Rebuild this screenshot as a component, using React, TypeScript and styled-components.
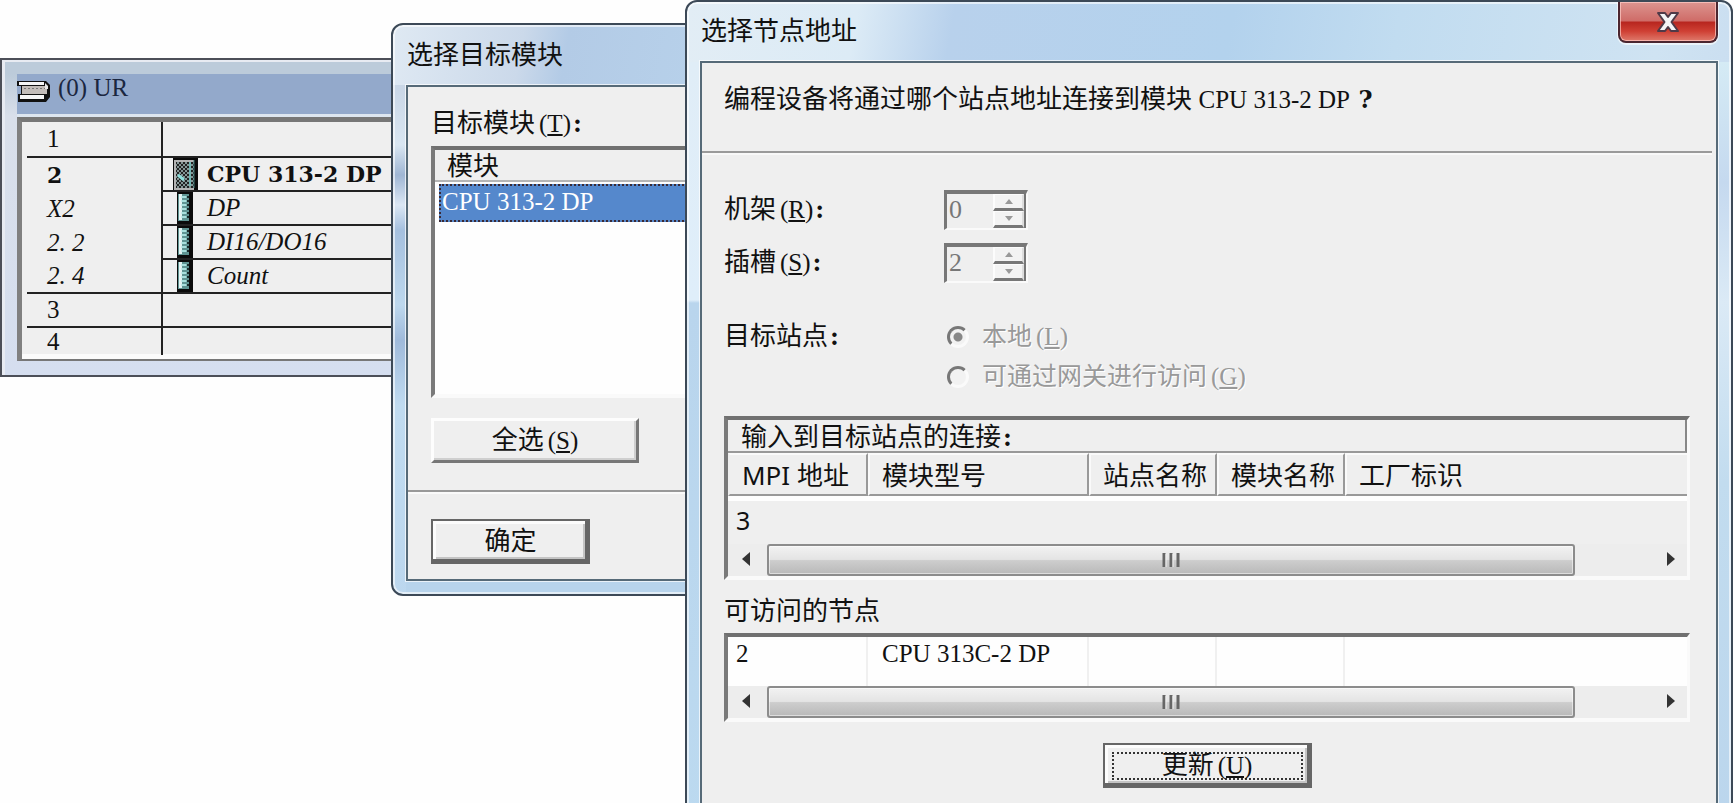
import React from 'react';
import styled, { createGlobalStyle, css } from 'styled-components';

const GlobalStyle = createGlobalStyle`
  *, *::before, *::after { box-sizing: border-box; }
  body { margin: 0; background: #fefefe; }
  button, input { font: inherit; color: inherit; margin: 0; }
`;

const serifStack = `'Liberation Serif', 'Noto Sans CJK SC', serif`;
const sansStack = `'Noto Sans', 'Noto Sans CJK SC', sans-serif`;

const Desktop = styled.main`
  position: relative;
  height: 100vh;
  min-height: 600px;
  overflow: hidden;
  background: #fefefe;
  color: #111;
  font: 26px/32px ${serifStack};
`;

/* ---------- rack window ---------- */

const RackWindow = styled.section`
  position: absolute;
  left: 0;
  top: 58px;
  width: 440px;
  padding: 14px 0 14px 15px;
  border: 2px solid #4c4f58;
  background: linear-gradient(180deg, #bccbda 0, #bccbda 14px, #d9dfea 56px, #d5deef 100%);
  box-shadow: inset 3px 2px 0 #e8ebf2;
`;

const RackTitle = styled.h2`
  display: flex;
  align-items: flex-start;
  gap: 7px;
  margin: 0;
  height: 43px;
  border-bottom: 3px solid #dde6f0;
  background: #93a9cb;
  color: #1b2740;
  font-size: 25px;
  font-weight: 400;
  line-height: 28px;

  svg { margin-top: 6px; }
`;

const RackPane = styled.div`
  border-top: 5px solid #777;
  border-left: 5px solid #808080;
  border-bottom: 2px solid #777;
  padding: 0 0 4px 5px;
  background: #efefef;
  box-shadow: inset 0 -5px 0 #fbfbfb;
`;

const RackTable = styled.table`
  width: 100%;
  border-collapse: separate;
  border-spacing: 0;
  table-layout: fixed;
`;

const RackRow = styled.tr<{ $tone?: 'bold' | 'italic'; $last?: boolean }>`
  height: ${p => (p.$last ? 27 : 34)}px;
  font-size: 25px;
  line-height: 26px;
  &:first-child { height: 36px; }
  ${p => p.$tone === 'italic' && css`font-style: italic;`}
  ${p => p.$tone === 'bold' && css`
    font-family: 'DejaVu Serif', serif;
    font-weight: 700;
    font-size: 22px;
  `}
`;

const SlotCell = styled.td<{ $line?: boolean }>`
  width: 136px;
  padding: 0 0 0 20px;
  border-right: 2px solid #222;
  border-bottom: ${p => (p.$line ? '2px solid #222' : '0')};
`;

const ModuleCell = styled.td<{ $line?: boolean }>`
  padding: 0 0 0 9px;
  border-bottom: ${p => (p.$line ? '2px solid #222' : '0')};
`;

const ModuleName = styled.div`
  display: flex;
  align-items: center;
  gap: 9px;
  height: 32px;
  white-space: nowrap;
`;

const IconSlot = styled.span`
  display: flex;
  justify-content: center;
  width: 26px;

  svg { display: block; }
`;

/* ---------- dialog frame ---------- */

const Dialog = styled.section<{ $main?: boolean }>`
  position: absolute;
  display: flex;
  flex-direction: column;
  padding: 0 13px 13px;
  border: 2px solid #3c4957;
  border-radius: 12px;
  ${p => p.$main ? css`
    left: 685px;
    right: 1px;
    top: 0;
    min-height: calc(100vh + 20px);
    background:
      linear-gradient(180deg, #e0edf7 0, #dfeefa 238px, #b9d5ed 241px, #bcdaf0 100%) 0 60px / 13px 100% no-repeat,
      linear-gradient(180deg, #d5ebf5 0, #c5d9ef 120px, #dbeaf6 240px, #c2dcef 420px, #b9d4ec 100%) 100% 60px / 13px 100% no-repeat,
      linear-gradient(100deg, #e2edf5 0, #dcebf6 170px, #b8d1ec 265px, #b3d2ed 46%, #c1dcf0 60%, #cfe3f2 82%, #c8dcf0 92%, #d5ebf6 100%);
  ` : css`
    left: 391px;
    top: 23px;
    width: 420px;
    background:
      linear-gradient(180deg, #c9d6e6 0, #d9e6f2 60px, #9fb6d4 90px, #dbe7f4 120px, #a5c0df 145px, #bdd8ee 220px, #9fbadb 255px, #c0dbf0 320px, #bbd6ee 100%) 0 60px / 13px 100% no-repeat,
      linear-gradient(180deg, transparent 65%, #b8d4ec 85%),
      linear-gradient(100deg, #dfe9f3 0, #cbd9ea 130px, #b3cbe6 175px, #bdd9f0 100%);
  `}
  box-shadow: inset 0 0 0 2px rgba(255, 255, 255, 0.6);
`;

const TitleBar = styled.header<{ $main?: boolean }>`
  display: flex;
  justify-content: space-between;
  align-items: center;
  height: ${p => (p.$main ? 59 : 60)}px;
  flex: none;
`;

const Title = styled.h1`
  margin: 0;
  padding: 0 0 3px 1px;
  font: 400 26px/32px ${sansStack};
`;

const CloseButton = styled.button`
  align-self: flex-start;
  display: flex;
  justify-content: center;
  align-items: center;
  width: 100px;
  height: 41px;
  padding: 0;
  border: 2px solid #4b2630;
  border-top: 0;
  border-radius: 0 0 8px 8px;
  background: linear-gradient(180deg, #dc9590 0, #cf6c68 48%, #b8261f 52%, #cf4034 75%, #df7a6c 100%);
  box-shadow: inset 0 0 0 1px rgba(255, 205, 200, 0.7), 0 1px 0 1px rgba(255, 255, 255, 0.6);
`;

const Client = styled.div`
  flex: 1;
  border: 2px solid #566a78;
  background: #efefef;
  box-shadow: 0 0 0 1px rgba(255, 255, 255, 0.7);
`;

/* ---------- shared controls ---------- */

const Bold = styled.b`
  padding-left: 2px;
  font-family: 'DejaVu Serif', serif;
  font-weight: 700;
  font-size: 24px;
`;

const ModelName = styled.span`
  font-size: 25px;
`;

const KeyHint = styled.span`
  margin-left: 4px;
  font-size: 25px;

  u {
    text-decoration-thickness: 2px;
    text-underline-offset: 2px;
  }
`;

const Key = ({ children }: { children: string }) => <KeyHint>(<u>{children}</u>)</KeyHint>;

const Sunken = styled.div`
  border: solid;
  border-width: 4px 3px 4px 4px;
  border-color: #707070 #fafafa #fafafa #7a7a7a;
  background: #fefefe;
`;

const PushButton = styled.button<{ $width: number; $default?: boolean }>`
  display: flex;
  align-items: center;
  justify-content: center;
  width: ${p => p.$width}px;
  height: 45px;
  padding: 0;
  background: #efefef;
  white-space: pre;
  ${p => p.$default ? css`
    border: 2px solid #666;
    box-shadow: inset -3px -3px 0 #666, inset 3px 3px 0 #fcfcfc, inset -5px -5px 0 #c4c4c4;
  ` : css`
    border: solid;
    border-width: 3px;
    border-color: #fdfdfd #777 #777 #fdfdfd;
    box-shadow: inset -2px -2px 0 #cfcfcf;
  `}
`;

const FocusRing = styled.span`
  flex: 1;
  margin: 0 7px;
  height: 28px;
  line-height: 24px;
  border: 2px dotted #333;
`;

/* ---------- target module dialog ---------- */

const ModuleBody = styled.div`
  padding: 21px 24px 27px 23px;
`;

const FieldTitle = styled.div`
  margin-bottom: 6px;
`;

const ModuleList = styled(Sunken)`
  height: 252px;
  margin-bottom: 20px;
`;

const ModuleTable = styled.table`
  width: 100%;
  border-collapse: separate;
  border-spacing: 0;

  th {
    height: 32px;
    padding: 4px 0 0 12px;
    border-bottom: 2px solid #b5b5b5;
    background: #efefef;
    font-weight: 400;
    line-height: 26px;
    text-align: left;
  }
  td { padding: 2px 0 0 4px; }
`;

const SelectedItem = styled.div`
  padding: 0 1px 2px;
  border: 2px dotted #3a2a35;
  background: #5588cc;
  color: #fff;
  font-size: 25px;
`;

const ModuleFooter = styled.footer`
  padding: 27px 24px 15px 23px;
  border-top: 2px solid #999;
  box-shadow: inset 0 2px 0 #fafafa;
`;

/* ---------- node address dialog ---------- */

const Prompt = styled.p`
  margin: 0 4px 0 0;
  padding: 21px 22px 35px;
  border-bottom: 2px solid #9a9a9a;
  box-shadow: 0 2px 0 #f8f8f8;
  white-space: nowrap;
`;

const NodeBody = styled.div`
  padding: 37px 26px 40px 22px;
`;

const Form = styled.div`
  display: grid;
  grid-template-columns: 220px 1fr;
  grid-auto-rows: 40px;
  row-gap: 13px;
  align-items: center;
`;

const StationGroup = styled.div`
  display: grid;
  grid-template-columns: 220px 1fr;
  grid-auto-rows: 40px;
  align-items: center;
  margin: 34px 0 19px;
`;

const Spinner = styled.div`
  display: flex;
  width: 84px;
  height: 40px;
  border: solid;
  border-width: 4px 2px 2px 3px;
  border-color: #777 #fafafa #fafafa #777;
  color: #777;

  input {
    flex: 1;
    min-width: 0;
    padding: 0 0 2px 2px;
    border: 0;
    background: transparent;
    color: #777;
  }
`;

const SpinButtons = styled.div`
  display: grid;
  grid-template-rows: 1fr 1fr;
  width: 33px;
  border-right: 2px solid #777;

  button {
    display: flex;
    align-items: center;
    justify-content: center;
    padding: 0;
    border: solid;
    border-width: 1px 2px 3px 2px;
    border-color: #fcfcfc #ddd #777 #fcfcfc;
    background: #f3f3f3;
  }
`;

const Option = styled.label`
  grid-column: 2;
  display: flex;
  align-items: center;
  gap: 13px;
  padding-left: 3px;
  color: #999;
  font-size: 25px;
  text-shadow: 1px 1px 0 #fff;
`;

const Radio = styled.input`
  appearance: none;
  width: 22px;
  height: 22px;
  border: 3px solid;
  border-color: #777 #fafafa #fafafa #777;
  border-radius: 50%;
  background: #f2f2f2;

  &:checked { background: radial-gradient(circle, #888 0, #888 4px, #f2f2f2 5px); }
`;

const ListTitle = styled.div`
  padding: 4px 0 0 13px;
  border-bottom: 2px solid #999;
  border-right: 2px solid #888;
  background: #efefef;
  line-height: 27px;
`;

const NodeTable = styled.table`
  width: 100%;
  border-collapse: separate;
  border-spacing: 0;
  table-layout: fixed;
`;

const HeadCell = styled.th`
  height: 43px;
  padding: 0 0 0 12px;
  border: 2px solid;
  border-color: #fafafa #999 #999 #fafafa;
  background: #efefef;
  font: 400 26px/32px ${sansStack};
  text-align: left;
  white-space: nowrap;

  &:last-child { border-right: 0; }
  &:first-child { border-left-color: #efefef; }
`;

const ConnectionCell = styled.td`
  height: 48px;
  padding: 0 0 6px 8px;
  border-top: 5px solid #fefefe;
  background: #efefef;
  font: 25px/32px ${sansStack};
`;

const NodeCell = styled.td`
  height: 49px;
  padding: 0 0 16px 14px;
  border-right: 2px solid #f0f0f0;
  font-size: 25px;
  white-space: nowrap;

  &:first-child { padding-left: 8px; }
  &:last-child { border-right: 0; }
`;

const ScrollBar = styled.div`
  display: flex;
  height: 32px;
  background: #ededed;
`;

const ScrollArrow = styled.button<{ $width: number }>`
  display: flex;
  align-items: center;
  justify-content: center;
  flex: none;
  width: ${p => p.$width}px;
  padding: 0 4px 2px 0;
  border: 0;
  background: none;
`;

const Thumb = styled.div`
  flex: 803 1 0;
  display: flex;
  align-items: center;
  justify-content: center;
  border: 2px solid #8c8c8c;
  border-radius: 3px;
  background: linear-gradient(180deg, #f2f2f2 0, #e4e4e4 48%, #cdcdcd 52%, #b9b9b9 100%);
  box-shadow: inset 0 0 0 1px rgba(255, 255, 255, 0.5);
`;

const TrackRest = styled.div`
  flex: 84 1 0;
`;

const NodesTitle = styled.div`
  margin: 16px 0 5px;
`;

const Actions = styled.div`
  display: flex;
  justify-content: center;
  margin-top: 21px;
`;

/* ---------- drawings ---------- */

const RackIcon = () => (
  <svg width="34" height="22" viewBox="0 0 34 22" aria-hidden="true">
    <path d="M0 1H29L33 5V17L29 22H1V14H4V6H0Z" fill="#111" />
    <path d="M2 2H27V5H2ZM3 15H27V19H3Z" fill="#f6f6f6" />
    <path d="M5 6H30V14H5Z" fill="#c3bdb9" />
    <path d="M7 8.500H28" stroke="#777" strokeWidth="1" strokeDasharray="2 2" />
    <path d="M28 3L31 6V9H28Z" fill="#e8e8e8" />
  </svg>
);

const CpuIcon = () => (
  <svg width="25" height="32" viewBox="0 0 25 32" aria-hidden="true">
    <defs>
      <pattern id="mesh" width="4" height="4" patternUnits="userSpaceOnUse">
        <rect width="4" height="4" fill="#222" />
        <rect width="2" height="2" fill="#849595" />
        <rect x="2" y="2" width="2" height="2" fill="#849595" />
      </pattern>
    </defs>
    <rect width="25" height="32" fill="#0b0b0b" />
    <rect x="1" y="2" width="20" height="30" fill="#b4b4b4" />
    <rect x="3" y="4" width="18" height="26" fill="url(#mesh)" />
    <path d="M17 4V28" stroke="#6fb5b3" strokeWidth="2" />
    <path d="M5 17L11 22" stroke="#8fe0dc" strokeWidth="3" />
    <path d="M21 2V30" stroke="#3c7775" strokeWidth="1" />
  </svg>
);

const CardIcon = () => (
  <svg width="16" height="32" viewBox="0 0 16 32" aria-hidden="true">
    <rect width="16" height="32" fill="#0b0b0b" />
    <rect x="1" y="2" width="11" height="27" fill="#5f9492" />
    <rect x="2" y="2" width="3" height="26" fill="#e4f3f2" />
    <path d="M7 4V28" stroke="#a9e0dd" strokeWidth="5" strokeDasharray="2 2" />
    <path d="M11 4V28" stroke="#1a2c2c" strokeWidth="2" strokeDasharray="2 2" />
  </svg>
);

const CloseIcon = () => (
  <svg width="24" height="22" viewBox="0 0 24 22" aria-hidden="true">
    <path
      d="M2 2H9L12 6L15 2H22L15.500 11L22 20H15L12 16L9 20H2L8.500 11Z"
      fill="#f4f4f6"
      stroke="#4f3a48"
      strokeWidth="2"
      strokeLinejoin="round"
    />
  </svg>
);

const Triangle = ({ dir }: { dir: 'left' | 'right' }) => (
  <svg width="10" height="16" viewBox="0 0 10 16" aria-hidden="true">
    <path d={dir === 'left' ? 'M9 1V15L1 8Z' : 'M1 1V15L9 8Z'} fill="#333" />
  </svg>
);

const SpinMark = ({ up }: { up?: boolean }) => (
  <svg width="8" height="5" viewBox="0 0 8 5" aria-hidden="true">
    <path d={up ? 'M0 5H8L4 0Z' : 'M0 0H8L4 5Z'} fill="#999" />
  </svg>
);

const Grip = () => (
  <svg width="18" height="16" viewBox="0 0 18 16" aria-hidden="true">
    <path d="M2 1V15M9 1V15M16 1V15" stroke="#666" strokeWidth="3" />
    <path d="M4 2V15M11 2V15" stroke="#f0f0f0" strokeWidth="1" />
  </svg>
);

/* ---------- parts ---------- */

const HScroll = () => (
  <ScrollBar>
    <ScrollArrow $width={39} aria-label="向左滚动"><Triangle dir="left" /></ScrollArrow>
    <Thumb><Grip /></Thumb>
    <TrackRest />
    <ScrollArrow $width={28} aria-label="向右滚动"><Triangle dir="right" /></ScrollArrow>
  </ScrollBar>
);

const NumberField = ({ id, value }: { id: string; value: string }) => (
  <Spinner>
    <input id={id} type="text" value={value} disabled readOnly />
    <SpinButtons>
      <button disabled aria-label="增加"><SpinMark up /></button>
      <button disabled aria-label="减少"><SpinMark /></button>
    </SpinButtons>
  </Spinner>
);

const Column = styled.col<{ $width?: number }>`
  width: ${p => (p.$width ? `${p.$width}px` : 'auto')};
`;

const Columns = () => (
  <colgroup>
    <Column $width={140} />
    <Column $width={221} />
    <Column $width={128} />
    <Column $width={128} />
    <Column />
  </colgroup>
);

type Slot = {
  slot: string;
  name?: string;
  icon?: React.ReactNode;
  tone?: 'bold' | 'italic';
  slotLine?: boolean;
  line?: boolean;
};

const slots: Slot[] = [
  { slot: '1', slotLine: true, line: true },
  { slot: '2', name: 'CPU 313-2 DP', icon: <CpuIcon />, tone: 'bold', line: true },
  { slot: 'X2', name: 'DP', icon: <CardIcon />, tone: 'italic', line: true },
  { slot: '2. 2', name: 'DI16/DO16', icon: <CardIcon />, tone: 'italic', line: true },
  { slot: '2. 4', name: 'Count', icon: <CardIcon />, tone: 'italic', slotLine: true, line: true },
  { slot: '3', slotLine: true, line: true },
  { slot: '4' },
];

const Rack = () => (
  <RackWindow>
    <RackTitle><RackIcon />(0) UR</RackTitle>
    <RackPane>
      <RackTable>
        <tbody>
          {slots.map(s => (
            <RackRow key={s.slot} $tone={s.tone} $last={!s.line}>
              <SlotCell $line={s.slotLine}>{s.slot}</SlotCell>
              <ModuleCell $line={s.line}>
                {s.name && <ModuleName><IconSlot>{s.icon}</IconSlot>{s.name}</ModuleName>}
              </ModuleCell>
            </RackRow>
          ))}
        </tbody>
      </RackTable>
    </RackPane>
  </RackWindow>
);

const ModuleDialog = () => (
  <Dialog role="dialog" aria-labelledby="module-title">
    <TitleBar><Title id="module-title">选择目标模块</Title></TitleBar>
    <Client>
      <ModuleBody>
        <FieldTitle id="module-label">目标模块<Key>T</Key><Bold>:</Bold></FieldTitle>
        <ModuleList>
          <ModuleTable aria-labelledby="module-label">
            <thead><tr><th>模块</th></tr></thead>
            <tbody><tr><td><SelectedItem>CPU 313-2 DP</SelectedItem></td></tr></tbody>
          </ModuleTable>
        </ModuleList>
        <PushButton $width={208}>全选<Key>S</Key></PushButton>
      </ModuleBody>
      <ModuleFooter>
        <PushButton $width={159} $default>确定</PushButton>
      </ModuleFooter>
    </Client>
  </Dialog>
);

const NodeDialog = () => (
  <Dialog $main role="dialog" aria-labelledby="node-title">
    <TitleBar $main>
      <Title id="node-title">选择节点地址</Title>
      <CloseButton aria-label="关闭"><CloseIcon /></CloseButton>
    </TitleBar>
    <Client>
      <Prompt>编程设备将通过哪个站点地址连接到模块 <ModelName>CPU 313-2 DP</ModelName> <Bold>?</Bold></Prompt>
      <NodeBody>
        <Form>
          <label htmlFor="rack">机架<Key>R</Key><Bold>:</Bold></label>
          <NumberField id="rack" value="0" />
          <label htmlFor="slot">插槽<Key>S</Key><Bold>:</Bold></label>
          <NumberField id="slot" value="2" />
        </Form>
        <StationGroup role="radiogroup" aria-labelledby="station-label">
          <span id="station-label">目标站点<Bold>:</Bold></span>
          <Option><Radio type="radio" name="station" defaultChecked disabled /><span>本地<Key>L</Key></span></Option>
          <Option><Radio type="radio" name="station" disabled /><span>可通过网关进行访问<Key>G</Key></span></Option>
        </StationGroup>
        <Sunken>
          <ListTitle id="connection-label">输入到目标站点的连接<Bold>:</Bold></ListTitle>
          <NodeTable aria-labelledby="connection-label">
            <Columns />
            <thead>
              <tr>
                <HeadCell>MPI 地址</HeadCell>
                <HeadCell>模块型号</HeadCell>
                <HeadCell>站点名称</HeadCell>
                <HeadCell>模块名称</HeadCell>
                <HeadCell>工厂标识</HeadCell>
              </tr>
            </thead>
            <tbody>
              <tr>
                <ConnectionCell>3</ConnectionCell>
                <ConnectionCell />
                <ConnectionCell />
                <ConnectionCell />
                <ConnectionCell />
              </tr>
            </tbody>
          </NodeTable>
          <HScroll />
        </Sunken>
        <NodesTitle id="nodes-label">可访问的节点</NodesTitle>
        <Sunken>
          <NodeTable aria-labelledby="nodes-label">
            <Columns />
            <tbody>
              <tr>
                <NodeCell>2</NodeCell>
                <NodeCell>CPU 313C-2 DP</NodeCell>
                <NodeCell />
                <NodeCell />
                <NodeCell />
              </tr>
            </tbody>
          </NodeTable>
          <HScroll />
        </Sunken>
        <Actions>
          <PushButton $width={209} $default><FocusRing>更新<Key>U</Key></FocusRing></PushButton>
        </Actions>
      </NodeBody>
    </Client>
  </Dialog>
);

export default function App() {
  return (
    <>
      <GlobalStyle />
      <Desktop>
        <Rack />
        <ModuleDialog />
        <NodeDialog />
      </Desktop>
    </>
  );
}
